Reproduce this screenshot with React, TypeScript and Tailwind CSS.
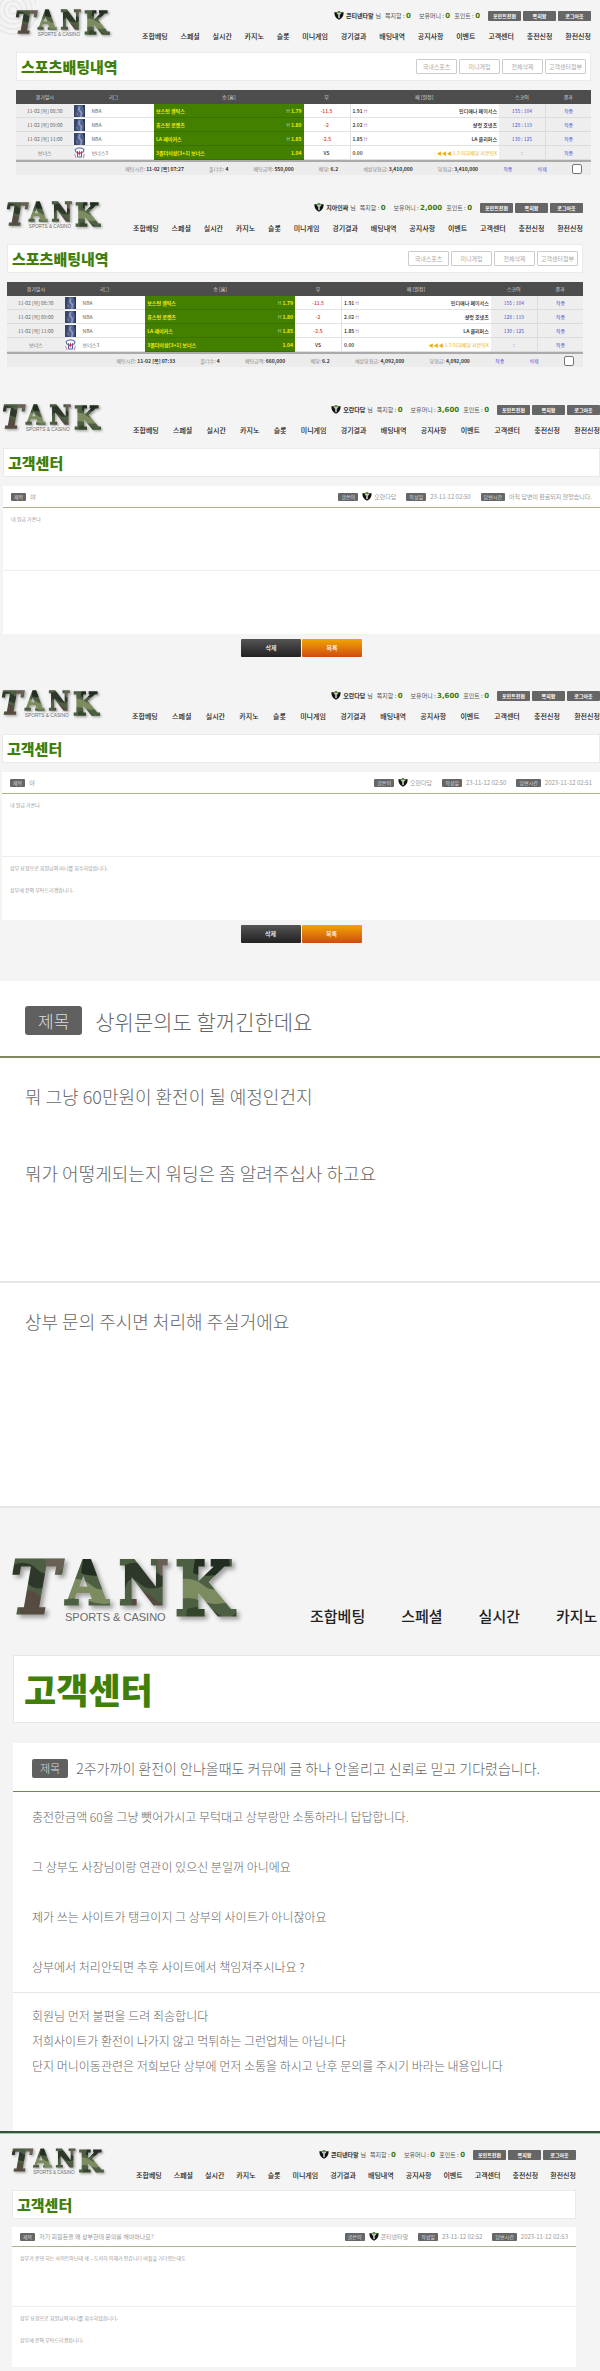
import { useId } from "react"
import clsx from "clsx"

const menu = [
    "조합베팅", "스페셜", "실시간", "카지노", "슬롯", "미니게임", "경기결과",
    "배팅내역", "공지사항", "이벤트", "고객센터", "충전신청", "환전신청",
]

const games = [
    { date: "11-02 [목] 08:30", league: "NBA", home: "보스턴 셀틱스", homeOdd: "1.79", draw: "-11.5", awayOdd: "1.91", away: "인디애나 페이서스", score: "155 : 104" },
    { date: "11-02 [목] 09:00", league: "NBA", home: "휴스턴 로켓츠", homeOdd: "1.80", draw: "-2", awayOdd: "2.02", away: "샬럿 호넷츠", score: "128 : 119" },
    { date: "11-02 [목] 11:00", league: "NBA", home: "LA 레이커스", homeOdd: "1.85", draw: "-2.5", awayOdd: "1.85", away: "LA 클리퍼스", score: "130 : 125" },
    { date: "보너스", league: "보너스3", home: "3폴더이상[3+1] 보너스", homeOdd: "1.04", draw: "VS", awayOdd: "0.00", away: "◀◀◀ 1.3 이하배당 카운팅X", score: ":" },
]

const Logo = ({ className }: { className: string }) => {
    const id = useId()
    const letter = {
        fontFamily: "'DejaVu Serif Condensed', 'DejaVu Serif', serif",
        fontWeight: 700,
        fill: `url(#${id}camo)`,
        stroke: `url(#${id}camo)`,
        strokeWidth: 3,
    }

    return (
        <svg viewBox="0 0 224 68" className={clsx("shrink-0 overflow-visible", className)} role="img" aria-label="TANK Sports & Casino">
            <defs>
                <pattern id={`${id}camo`} width="112" height="68" patternUnits="userSpaceOnUse">
                    <rect width="112" height="68" fill="#4d5f43" />
                    <path d="M0 6 Q14 0 24 10 T44 8 L40 26 Q24 34 14 24 T0 30Z" fill="#2f3929" />
                    <path d="M50 22 Q66 16 78 26 T104 24 L108 42 Q90 48 76 42 T50 42Z" fill="#7c8c60" />
                    <path d="M70 0 H104 Q108 14 92 16 T68 14Z" fill="#222d20" />
                    <path d="M6 34 Q18 28 28 38 T44 44 L36 60 Q20 54 8 62Z" fill="#564b41" />
                    <path d="M32 0 H52 Q50 14 42 16 T34 14Z" fill="#6b5f55" />
                    <path d="M62 50 Q80 44 92 54 T112 52 V68 H60Z" fill="#35462a" />
                </pattern>
                <filter id={`${id}shade`} x="-10%" y="-10%" width="125%" height="130%">
                    <feDropShadow dx="3" dy="3" stdDeviation="2" floodColor="#000" floodOpacity="0.35" />
                </filter>
            </defs>
            <g filter={`url(#${id}shade)`} style={letter}>
                <text x="-2" y="54" fontSize="72" fontStyle="italic">T</text>
                <text x="53" y="45" fontSize="60">A</text>
                <text x="106" y="45" fontSize="60">N</text>
                <text x="162" y="56" fontSize="74">K</text>
            </g>
            <text x="52" y="62" fontSize="11" fill="#6b6b6b" stroke="#f4f4f4" strokeWidth="3" paintOrder="stroke" style={{ fontFamily: "'Liberation Sans', sans-serif" }}>
                SPORTS &amp; CASINO
            </text>
        </svg>
    )
}

const Shield = () => (
    <svg viewBox="0 0 30 26" className="h-[9px] w-[10px] shrink-0" aria-hidden="true">
        <path d="M1 3 Q8 4 15 0 Q22 4 29 3 Q29 19 15 26 Q1 19 1 3Z" fill="#111" />
        <path d="M6 3 Q11 3 15 0 Q19 3 24 3 L23 6 H7Z" fill="#5c9a3a" />
        <path d="M9 6 H21 V9 H17 V20 L15 22 L13 20 V9 H9Z" fill="#f2f2f2" />
    </svg>
)

const LeagueIcon = ({ bonus }: { bonus: boolean }) => bonus ? (
    <svg viewBox="0 0 22 24" className="h-[12px] w-[11px] shrink-0" aria-hidden="true">
        <rect width="22" height="24" fill="#f3f1f4" />
        <path d="M2 5 L8 2 H14 L20 5 L18 11 L15 9 V20 H7 V9 L4 11Z" fill="#fff" stroke="#4a63ab" strokeWidth="2" />
        <path d="M11 7 L13 11 L16 12 L12 14 L11 18 L9 14 L6 12 L9 11Z" fill="#d43a4a" />
        <path d="M1 14 L4 22 M21 14 L18 22" stroke="#c98a9a" strokeWidth="2" />
    </svg>
) : (
    <svg viewBox="0 0 22 24" className="h-[12px] w-[11px] shrink-0" aria-hidden="true">
        <rect width="22" height="24" fill="#4f628c" />
        <path d="M0 0 H8 L5 12 L8 24 H0Z" fill="#35466f" />
        <path d="M9 3 L13 2 L12 9 L17 15 L15 24 H12 L13 16 L8 10Z" fill="#8d98b8" />
        <path d="M17 0 H22 V24 H19 L20 10Z" fill="#2c3556" />
        <path d="M4 14 L8 18 L6 23Z" fill="#8f7f92" />
    </svg>
)

type User = { name: string; money: string }

const Count = ({ label, value }: { label: string; value: string }) => (
    <span>
        {label} : <b className="font-['DejaVu_Sans',sans-serif] text-[7px] font-bold text-[#3b7a0c]">{value}</b>
    </span>
)

const Header = ({ user, className, logoClass }: { user: User; className: string; logoClass: string }) => (
    <header className={clsx("flex items-start gap-8", className)}>
        <Logo className={logoClass} />
        <div className="flex min-w-0 grow flex-col gap-[10px]">
            <div className="flex h-[11px] items-center justify-end gap-2 text-[6px] leading-[10px] whitespace-nowrap text-[#555]">
                <div className="flex items-center gap-[4px]">
                    <span className="flex items-center gap-[2px]">
                        <Shield />
                        <b className="font-bold text-[#333]">{user.name}</b>
                        <span>님</span>
                    </span>
                    <Count label="쪽지함" value="0" />
                </div>
                <div className="flex items-center gap-[4px]">
                    <Count label="보유머니" value={user.money} />
                    <Count label="포인트" value="0" />
                </div>
                <div className="flex gap-[2px]">
                    {["포인트전환", "쪽지함", "로그아웃"].map((label) => (
                        <button key={label} className="h-[10px] w-[33px] rounded-[1px] bg-[#666] text-[5px] leading-[10px] font-bold text-white">
                            {label}
                        </button>
                    ))}
                </div>
            </div>
            <nav className="flex justify-between text-[7px] leading-[10px] font-medium whitespace-nowrap text-[#222]">
                {menu.map((item) => <a key={item} href="#">{item}</a>)}
            </nav>
        </div>
    </header>
)

const TitleBox = ({ title, children }: { title: string; children?: React.ReactNode }) => (
    <div className="flex h-[29px] items-center justify-between border border-[#eaeaea] bg-white px-1">
        <h1 className="text-[15px] leading-[20px] font-black text-[#3f7f0a]">{title}</h1>
        {children}
    </div>
)

const FootItem = ({ label, value }: { label: string; value: string }) => (
    <span>{label}: <b className="font-bold text-[#333]">{value}</b></span>
)

type Bet = { time: string; amount: string; payout: string }

const BetTable = ({ bet }: { bet: Bet }) => (
    <table className="mt-[9px] w-full table-fixed border-separate border-spacing-0 text-[5px] leading-[8px] whitespace-nowrap text-[#666]">
        <colgroup>
            <col className="w-[10%]" />
            <col className="w-[14%]" />
            <col className="w-[26%]" />
            <col className="w-[8%]" />
            <col className="w-[26%]" />
            <col className="w-[8%]" />
            <col className="w-[8%]" />
        </colgroup>
        <thead>
            <tr className="h-[14px] bg-[#4d4d4d] text-[#ddd]">
                {["경기일시", "리그", "승 [홈]", "무", "패 [원정]", "스코어", "결과"].map((head) => (
                    <th key={head} className="p-0 font-normal">{head}</th>
                ))}
            </tr>
        </thead>
        <tbody>
            {games.map((game) => {
                const bonus = game.draw === "VS"
                return (
                    <tr key={game.date} className="h-[14px]">
                        <td className="border-b border-[#dcdcdc] bg-[#eee] p-0 text-center">{game.date}</td>
                        <td className="border-b border-[#e2e2e2] bg-white p-0">
                            <div className="flex items-center gap-[7px]">
                                <LeagueIcon bonus={bonus} />
                                <span>{game.league}</span>
                            </div>
                        </td>
                        <td className="border-b border-[#3a7000] bg-[#438000] px-[2px] py-0 text-[#f5ee00]">
                            <div className="flex justify-between font-bold">
                                <span>{game.home}</span>
                                <span>
                                    {!bonus && <span className="font-normal text-[#b5cf8a]">H </span>}
                                    {game.homeOdd}
                                </span>
                            </div>
                        </td>
                        <td className={clsx("border-b border-[#e2e2e2] bg-white p-0 text-center font-medium", bonus ? "text-[#333]" : "text-[#e0352b]")}>
                            {game.draw}
                        </td>
                        <td className="border-b border-l border-[#e2e2e2] bg-white px-[2px] py-0">
                            <div className="flex justify-between">
                                <span>
                                    <b className="font-medium text-[#222]">{game.awayOdd}</b>
                                    {!bonus && <span className="text-[#b48cc4]"> H</span>}
                                </span>
                                <span className={bonus ? "text-[#edb20c]" : "font-medium text-[#222]"}>{game.away}</span>
                            </div>
                        </td>
                        <td className="border-b border-[#dcdcdc] bg-[#eee] p-0 text-center text-[#5252d8]">{game.score}</td>
                        <td className="border-b border-l border-[#dcdcdc] bg-[#eee] p-0 text-center text-[#5252d8]">적중</td>
                    </tr>
                )
            })}
        </tbody>
        <tfoot>
            <tr>
                <td colSpan={7} className="border-t-2 border-[#aaa] bg-[#ececec] p-0">
                    <div className="flex h-[13px] items-center justify-between pr-[9px] pl-[19%] text-[#888]">
                        <FootItem label="배팅시간" value={bet.time} />
                        <FootItem label="폴더수" value="4" />
                        <FootItem label="배팅금액" value={bet.amount} />
                        <FootItem label="배당" value="6.2" />
                        <FootItem label="예상당첨금" value={bet.payout} />
                        <FootItem label="당첨금" value={bet.payout} />
                        <a href="#" className="text-[#5252d8]">적중</a>
                        <a href="#" className="text-[#5252d8]">삭제</a>
                        <input type="checkbox" aria-label="선택" className="size-[10px] appearance-none rounded-[2px] border border-[#777] bg-white" />
                    </div>
                </td>
            </tr>
        </tfoot>
    </table>
)

const BetPage = ({ user, bet, className }: { user: User; bet: Bet; className: string }) => (
    <section className={className}>
        <Header user={user} className="h-[42px]" logoClass="w-[94px]" />
        <TitleBox title="스포츠배팅내역">
            <div className="flex gap-[2px]">
                {["국내스포츠", "미니게임", "전체삭제", "고객센터첨부"].map((label) => (
                    <button key={label} className="h-[15px] w-[41px] rounded-[1px] border border-[#ccc] text-[6px] leading-[10px] whitespace-nowrap text-[#aaa]">
                        {label}
                    </button>
                ))}
            </div>
        </TitleBox>
        <BetTable bet={bet} />
    </section>
)

const Badge = ({ children }: { children: string }) => (
    <span className="rounded-[1px] bg-[#666] px-[3px] text-[5px] leading-[8px] text-[#ddd]">{children}</span>
)

type Inquiry = { subject: string; written: string; answered: string; question: string; answer: string[] }

// 1:1 문의 상세
const InquiryPage = ({ user, inquiry, className, headerClass, logoClass, compact, buttons }: {
    user: User
    inquiry: Inquiry
    className: string
    headerClass: string
    logoClass: string
    compact?: boolean
    buttons?: boolean
}) => (
    <section className={className}>
        <Header user={user} className={headerClass} logoClass={logoClass} />
        <TitleBox title="고객센터" />
        <article className={clsx("bg-white text-[#999]", compact ? "mt-2" : "mt-[9px]")}>
            <div className={clsx("flex items-center justify-between border-b border-[#a9b58c] px-2 text-[6px] leading-[10px] whitespace-nowrap", compact ? "h-[20px]" : "h-[22px]")}>
                <div className="flex items-center gap-[4px]">
                    <Badge>제목</Badge>
                    <h2>{inquiry.subject}</h2>
                </div>
                <div className="flex items-center gap-[10px]">
                    <span className="flex items-center gap-[4px]">
                        <Badge>글쓴이</Badge>
                        <span className="flex items-center gap-[2px]"><Shield />{user.name}</span>
                    </span>
                    <span className="flex items-center gap-[4px]"><Badge>작성일</Badge>{inquiry.written}</span>
                    <span className="flex items-center gap-[4px]"><Badge>답변시간</Badge>{inquiry.answered}</span>
                </div>
            </div>
            <div className={clsx("border-b border-[#eee] px-2 text-[5px] leading-[22px]", compact ? "min-h-[60px]" : "min-h-[63px]")}>
                <p>{inquiry.question}</p>
            </div>
            <div className={clsx("px-2 text-[5px] leading-[22px]", compact ? "min-h-[60px]" : "min-h-[63px]")}>
                {inquiry.answer.map((line) => <p key={line}>{line}</p>)}
            </div>
        </article>
        {buttons && (
            <div className="mt-[5px] flex justify-center gap-[1px] text-[6px] leading-[10px] font-medium text-white">
                <button className="h-[18px] w-[60px] rounded-[1px] bg-linear-to-b from-[#555] to-[#222]">삭제</button>
                <button className="h-[18px] w-[60px] rounded-[1px] bg-linear-to-b from-[#efa500] to-[#cf4a10]">목록</button>
            </div>
        )}
    </section>
)

export default function App() {
    return (
        <main className="overflow-hidden bg-[#f4f4f4] font-['Noto_Sans_CJK_KR',sans-serif]">
            <div className="relative">
                <svg viewBox="0 0 36 40" className="absolute top-0 left-0 h-[40px] w-[36px]" fill="none" stroke="#e9e9e9" strokeWidth="2" aria-hidden="true">
                    {[4, 9, 14, 19, 24].map((r) => <circle key={r} cx="13" cy="10" r={r} />)}
                </svg>
                <div className="relative">
                    <BetPage
                        className="pt-[10px] pr-[9px] pb-[15px] pl-4"
                        user={{ name: "콘티넨타알", money: "0" }}
                        bet={{ time: "11-02 [목] 07:27", amount: "550,000", payout: "3,410,000" }}
                    />
                </div>
            </div>
            <BetPage
                className="pt-3 pr-[17px] pb-[23px] pl-[7px]"
                user={{ name: "지아인짜", money: "2,000" }}
                bet={{ time: "11-02 [목] 07:33", amount: "660,000", payout: "4,092,000" }}
            />
            <InquiryPage
                className="pt-[14px] pb-[13px] pl-[3px]"
                headerClass="h-[44px]"
                logoClass="w-[98px]"
                user={{ name: "오란다담", money: "3,600" }}
                inquiry={{
                    subject: "야",
                    written: "23-11-12 02:50",
                    answered: "아직 답변이 완료되지 않았습니다.",
                    question: "내 원금 가온나",
                    answer: [],
                }}
                buttons
            />
            <InquiryPage
                className="pt-[20px] pb-[38px] pl-[2px]"
                headerClass="h-[44px]"
                logoClass="w-[98px]"
                user={{ name: "오란다담", money: "3,600" }}
                inquiry={{
                    subject: "야",
                    written: "23-11-12 02:50",
                    answered: "2023-11-12 02:51",
                    question: "내 원금 가온나",
                    answer: ["상부 요청으로 회원님의 머니를 회수하였습니다.", "상부에 문의 부탁드리겠습니다."],
                }}
                buttons
            />

            {/* 확대된 문의글 */}
            <article className="border-b-2 border-[#e6e6e6] bg-white font-light text-[#666]">
                <div className="flex h-[77px] items-center gap-[13px] border-b-2 border-[#7f8860] px-[25px] pt-1">
                    <span className="rounded-[3px] bg-[#606060] px-[13px] text-[17px] leading-[29px] text-[#ddd]">제목</span>
                    <h2 className="text-[21px] leading-[30px]">상위문의도 할꺼긴한데요</h2>
                </div>
                <div className="min-h-[225px] border-b-2 border-[#e6e6e6] px-[25px] text-[18px] leading-[77px]">
                    <p>뭐 그냥 60만원이 환전이 될 예정인건지</p>
                    <p>뭐가 어떻게되는지 워딩은 좀 알려주십사 하고요</p>
                </div>
                <div className="min-h-[223px] px-[25px] text-[18px] leading-[77px]">
                    <p>상부 문의 주시면 처리해 주실거에요</p>
                </div>
            </article>

            <section className="pt-[51px] pl-[13px]">
                <header className="flex h-[96px] items-start gap-[73px]">
                    <Logo className="w-[224px]" />
                    <nav className="flex gap-9 pt-[46px] text-[15px] leading-[22px] font-medium whitespace-nowrap text-[#222]">
                        {menu.slice(0, 4).map((item) => <a key={item} href="#">{item}</a>)}
                    </nav>
                </header>
                <div className="flex h-[68px] items-center border border-r-0 border-[#e6e6e6] bg-white px-[10px]">
                    <h1 className="text-[35px] leading-[48px] font-black text-[#3f7f0a]">고객센터</h1>
                </div>
                <article className="mt-[20px] bg-white font-light text-[#666]">
                    <div className="flex h-[49px] items-center gap-2 border-b border-[#73874a] px-[19px] pt-[2px]">
                        <span className="rounded-[2px] bg-[#606060] px-2 text-[11px] leading-[19px] text-[#ddd]">제목</span>
                        <h2 className="text-[14px] leading-[20px]">2주가까이 환전이 안나올때도 커뮤에 글 하나 안올리고 신뢰로 믿고 기다렸습니다.</h2>
                    </div>
                    <div className="border-b border-[#e6e6e6] px-[19px] text-[12px] leading-[50px]">
                        <p>충전한금액 60을 그냥 뺏어가시고 무턱대고 상부랑만 소통하라니 답답합니다.</p>
                        <p>그 상부도 사장님이랑 연관이 있으신 분일꺼 아니에요</p>
                        <p>제가 쓰는 사이트가 탱크이지 그 상부의 사이트가 아니잖아요</p>
                        <p>상부에서 처리안되면 추후 사이트에서 책임져주시나요 ?</p>
                    </div>
                    <div className="min-h-[138px] px-[19px] pt-[10px] text-[12px] leading-[25px]">
                        <p>회원님 먼저 불편을 드려 죄송합니다</p>
                        <p>저희사이트가 환전이 나가지 않고 먹튀하는 그런업체는 아닙니다</p>
                        <p>단지 머니이동관련은 저희보단 상부에 먼저 소통을 하시고 난후 문의를 주시기 바라는 내용입니다</p>
                    </div>
                </article>
            </section>

            <div className="border-t-2 border-[#33543b]">
                <InquiryPage
                    className="border-t border-[#a9c4a9] pt-[15px] pr-6 pb-1 pl-3"
                    headerClass="h-[41px]"
                    logoClass="w-[92px]"
                    user={{ name: "콘티넨타알", money: "0" }}
                    inquiry={{
                        subject: "저기 회원돈을 왜 상부한테 문의를 해야하나요?",
                        written: "23-11-12 02:52",
                        answered: "2023-11-12 02:53",
                        question: "상부가 운영 하는 사이트아닌데 왜 .. 도저히 이해가 안갑니다 며칠을 기다렸는데도",
                        answer: ["상부 요청으로 회원님의 머니를 회수하였습니다.", "상부에 문의 부탁드리겠습니다."],
                    }}
                    compact
                />
            </div>
        </main>
    )
}
